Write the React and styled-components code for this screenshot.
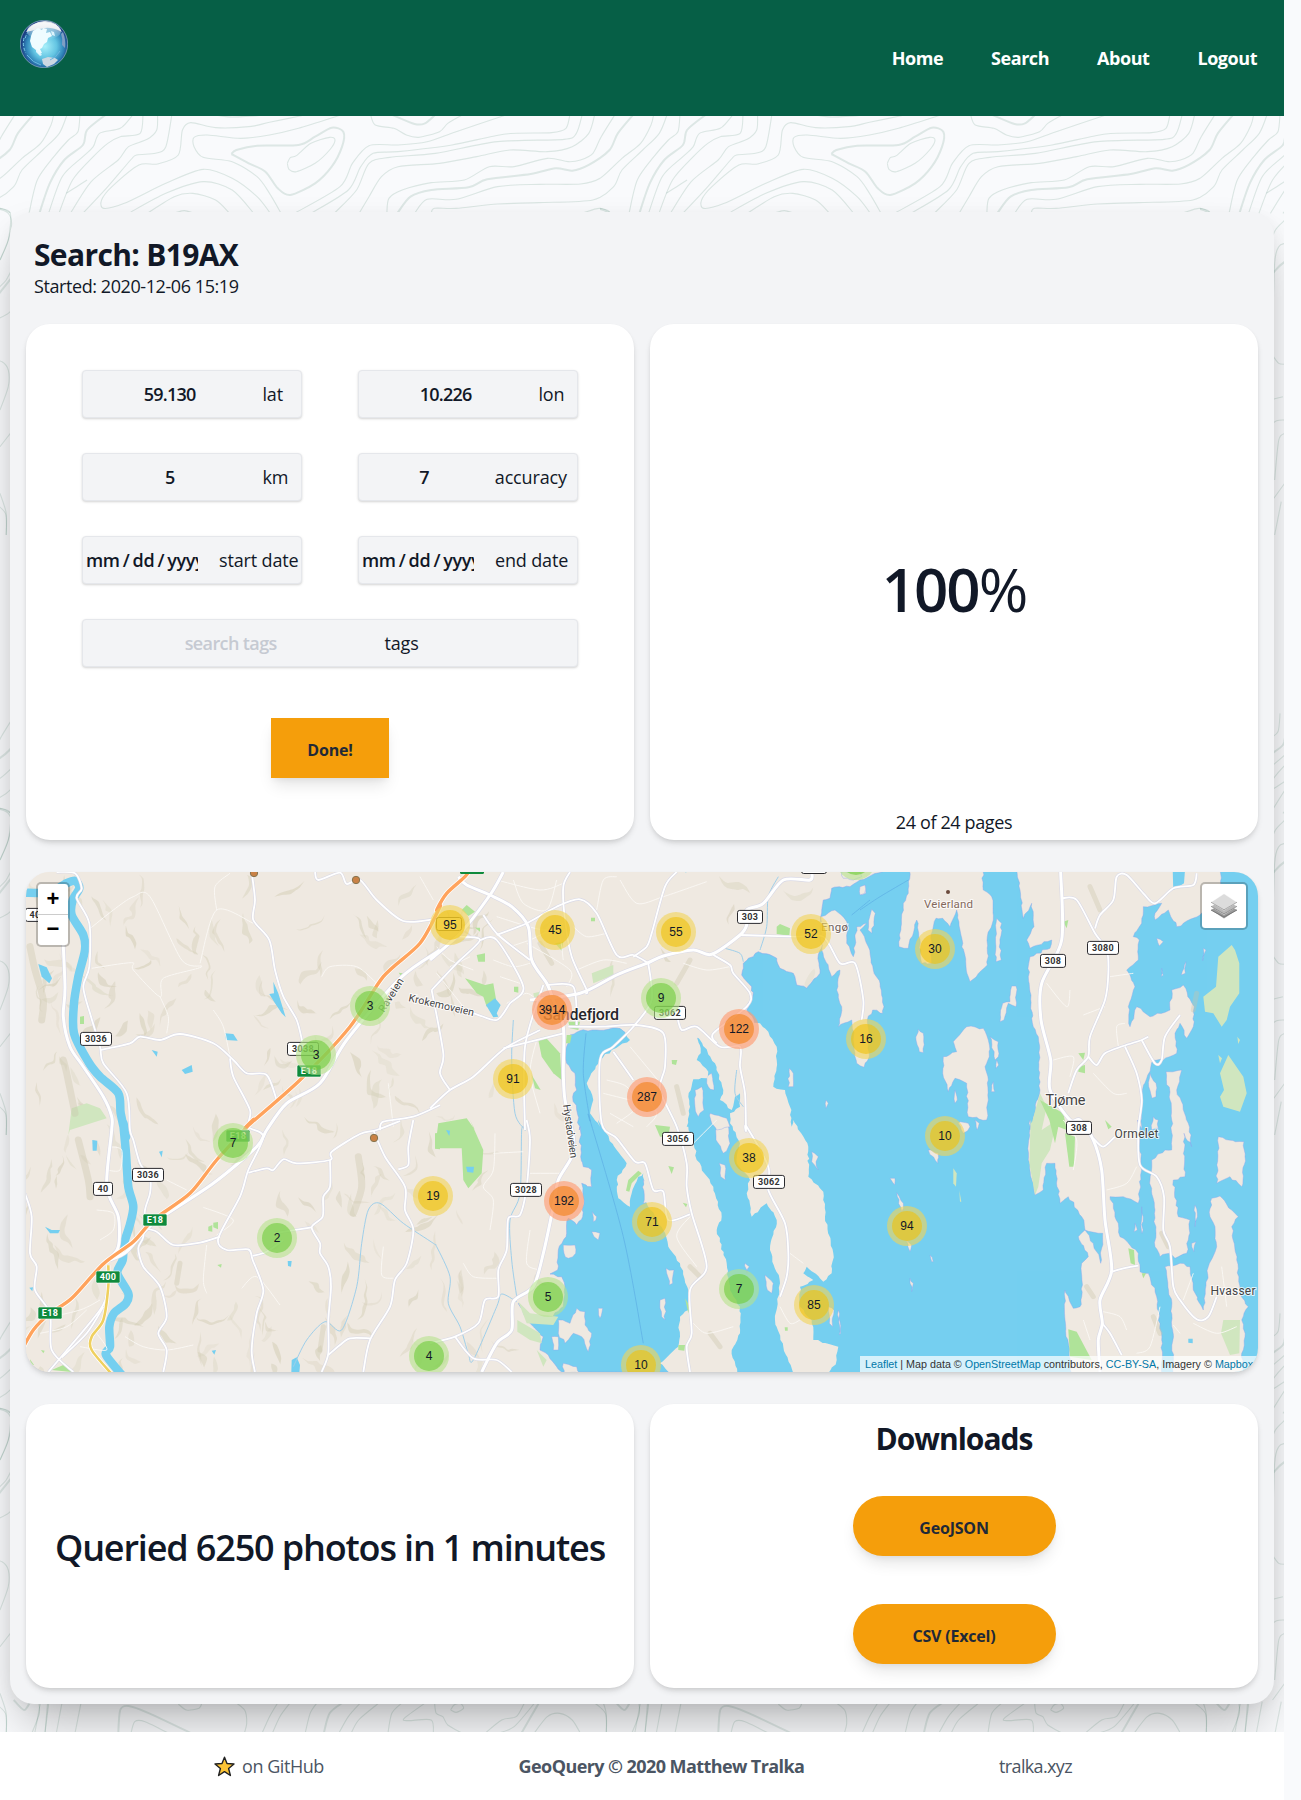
import React from "react";
import styled, { createGlobalStyle, css } from "styled-components";

const sans = `"Open Sans", "Noto Sans", sans-serif`;

const GlobalStyle = createGlobalStyle`
  *, *::before, *::after { box-sizing: border-box; }
  body { margin: 0; background: #f9fafc; color: #111827; font: 400 18px/28px ${sans}; }
  h1, h2, p { margin: 0; }
  a { color: inherit; text-decoration: none; }
`;

const Page = styled.div`
  position: relative;
  width: 1284px;
  height: 1800px;
  display: flex;
  flex-direction: column;
  overflow: hidden;
`;

/* ---------- header ---------- */
const Header = styled.header`
  position: relative;
  flex: none;
  height: 116px;
  padding: 0 27px 0 20px;
  display: flex;
  justify-content: space-between;
  align-items: center;
  background: #065f46;
`;
const Logo = styled.a`
  align-self: flex-start;
  margin-top: 20px;
  width: 48px;
  height: 48px;
`;
const Nav = styled.nav`
  display: flex;
  gap: 48px;
  font-weight: 700;
  letter-spacing: -0.45px;
  color: #fff;
`;

/* ---------- panel ---------- */
const Topography = styled.svg`
  position: absolute;
  inset: 0;
`;
const Panel = styled.main`
  position: relative;
  flex: none;
  margin: 96px 10px 28px;
  padding: 24px 16px 16px;
  border-radius: 24px;
  background: #f3f4f6;
  box-shadow: 0 25px 50px -12px rgba(0, 0, 0, 0.3), 0 4px 14px rgba(0, 0, 0, 0.05);
`;
const PanelHead = styled.div`
  padding: 1px 8px 24px;
  letter-spacing: -0.42px;
`;
const Title = styled.h1`
  margin-bottom: -1px;
  font-size: 30px;
  line-height: 36px;
  font-weight: 700;
  letter-spacing: -0.65px;
`;
const Grid = styled.div`
  display: grid;
  grid-template-columns: 1fr 1fr;
  grid-template-rows: 516px 500px 284px;
  gap: 32px 16px;
`;
const cardShadow = css`
  box-shadow: 0 4px 6px -1px rgba(0, 0, 0, 0.12), 0 2px 4px -1px rgba(0, 0, 0, 0.08);
`;
const Card = styled.section`
  display: flex;
  flex-direction: column;
  align-items: center;
  border-radius: 24px;
  background: #fff;
  ${cardShadow}
`;

/* ---------- form ---------- */
const Fields = styled.div`
  margin-top: 46px;
  display: grid;
  grid-template-columns: 220px 220px;
  grid-auto-rows: 48px;
  gap: 35px 56px;
`;
const Field = styled.label`
  display: flex;
  align-items: center;
  grid-column: span ${(p) => (p.$wide ? 2 : 1)};
  border: 1px solid #e5e7eb;
  border-radius: 4px;
  background: #f3f4f6;
  box-shadow: 0 1px 3px rgba(0, 0, 0, 0.1), 0 1px 2px rgba(0, 0, 0, 0.08);
`;
const Value = styled.span`
  flex: none;
  width: ${(p) => p.$share}%;
  padding-right: 1px;
  text-align: center;
  font-weight: 600;
  letter-spacing: -0.75px;
  color: ${(p) => (p.$placeholder ? "#c6cad2" : "#111827")};
  ${(p) => p.$placeholder && "letter-spacing: -0.6px;"}
`;
const DateValue = styled.span`
  flex: none;
  width: 115px;
  margin-right: 16px;
  padding-left: 3px;
  overflow: hidden;
  white-space: nowrap;
  font-weight: 600;
  letter-spacing: -0.35px;
  word-spacing: -1.2px;
`;
const Unit = styled.span`
  padding-left: 5px;
  white-space: nowrap;
  letter-spacing: -0.15px;
`;
const Button = styled.button`
  flex: none;
  width: ${(p) => (p.$pill ? 203 : 118)}px;
  height: 60px;
  padding: 3px 0 0;
  border: 0;
  border-radius: ${(p) => (p.$pill ? 30 : 0)}px;
  background: #f59e0b;
  color: #1f2937;
  font: 700 16px/24px ${sans};
  letter-spacing: -0.2px;
  box-shadow: 0 10px 15px -3px rgba(0, 0, 0, 0.1), 0 4px 6px -2px rgba(0, 0, 0, 0.06);
`;
const DoneButton = styled(Button)`
  margin-top: 51px;
`;

/* ---------- result cards ---------- */
const Percent = styled.div`
  flex: 1;
  display: flex;
  align-items: center;
  padding-top: 45px;
  font-size: 60px;
  line-height: 60px;
  letter-spacing: -2px;
  b { font-weight: 600; }
`;
const PageCount = styled.p`
  padding-bottom: 4px;
  letter-spacing: -0.36px;
`;
const Summary = styled(Card)`
  justify-content: center;
  font-size: 36px;
  line-height: 40px;
  font-weight: 600;
  letter-spacing: -1.15px;
  white-space: nowrap;
  padding-top: 4px;
`;
const Downloads = styled(Card)`
  padding-top: 17px;
  h2 {
    font-size: 30px;
    line-height: 36px;
    font-weight: 700;
    letter-spacing: -1px;
  }
`;
const DownloadList = styled.div`
  margin-top: 39px;
  display: flex;
  flex-direction: column;
  gap: 48px;
`;

/* ---------- map ---------- */
const MapFrame = styled.section`
  position: relative;
  grid-column: span 2;
  overflow: hidden;
  border-radius: 24px;
  background: #efe9e1;
  font-family: "Liberation Sans", Arial, sans-serif;
  ${cardShadow}
`;
const Canvas = styled.svg`
  display: block;
`;
const clusterTone = {
  s: ["rgba(181,226,140,.6)", "rgba(110,204,57,.6)"],
  m: ["rgba(241,211,87,.6)", "rgba(240,194,12,.6)"],
  l: ["rgba(253,156,115,.65)", "rgba(241,128,23,.6)"],
};
const Cluster = styled.div.attrs((p) => ({ style: { left: p.$x - 46, top: p.$y - 892 } }))`
  position: absolute;
  width: 40px;
  height: 40px;
  padding: 5px;
  border-radius: 50%;
  background: ${(p) => clusterTone[p.$tone][0]};
  span {
    display: block;
    height: 30px;
    border-radius: 50%;
    background: ${(p) => clusterTone[p.$tone][1]};
    font-size: 12px;
    line-height: 30px;
    text-align: center;
    color: #111827;
  }
`;
const control = css`
  position: absolute;
  top: 10px;
  border: 2px solid rgba(0, 0, 0, 0.22);
  border-radius: 5px;
  background: #fff;
  background-clip: padding-box;
`;
const ZoomControl = styled.div`
  ${control}
  left: 10px;
  width: 34px;
  color: #000;
  font: 700 22px/30px "Liberation Sans", sans-serif;
  text-align: center;
  div { height: 30px; }
  div + div { height: 31px; border-top: 1px solid #ccc; line-height: 28px; }
`;
const LayersControl = styled.div`
  ${control}
  right: 10px;
  width: 48px;
  height: 48px;
  display: grid;
  place-items: center;
`;
const Attribution = styled.div`
  position: absolute;
  right: 0;
  bottom: 0;
  width: 398px;
  height: 16px;
  padding-left: 5px;
  background: rgba(255, 255, 255, 0.7);
  color: #333;
  font-size: 10.75px;
  line-height: 16px;
  white-space: nowrap;
  a { color: #0078a8; }
`;

/* ---------- footer ---------- */
const Footer = styled.footer`
  position: relative;
  flex: 1;
  padding: 0 212px 0 214px;
  display: flex;
  align-items: center;
  justify-content: space-between;
  background: #fff;
  color: #4b5563;
  letter-spacing: -0.45px;
  b { font-weight: 700; letter-spacing: -0.58px; }
`;
const StarLink = styled.a`
  display: flex;
  align-items: center;
  gap: 7px;
`;
const SiteLink = styled.a`
  letter-spacing: -0.65px;
`;

/* ---------- map geometry: six tiles, points at three units per pixel ---------- */
const tiles = { A: [0, 860], B: [430, 860], C: [860, 860], D: [0, 1120], E: [430, 1120], F: [860, 1120] };
const trace = (src) => {
  let tile = tiles.A;
  const out = [];
  src.trim().split(/\s+/).forEach((tok) => {
    if (tiles[tok]) { tile = tiles[tok]; return; }
    const [x, y] = tok.split(",").map(Number);
    out.push([tile[0] + x / 3, tile[1] + y / 3]);
  });
  return out;
};
const poly = (src) => "M" + trace(src).map((p) => p.map((n) => n.toFixed(1)).join(" ")).join("L") + "Z";
const smooth = (pts) => {
  let d = `M${pts[0][0]} ${pts[0][1]}`;
  for (let i = 0; i < pts.length - 1; i++) {
    const a = pts[i - 1] || pts[i], b = pts[i], c = pts[i + 1], e = pts[i + 2] || c;
    const f = (n) => n.toFixed(1);
    d += `C${f(b[0] + (c[0] - a[0]) / 7)} ${f(b[1] + (c[1] - a[1]) / 7)} ${f(c[0] - (e[0] - b[0]) / 7)} ${f(c[1] - (e[1] - b[1]) / 7)} ${f(c[0])} ${f(c[1])}`;
  }
  return d;
};
const line = (src) => smooth(trace(src));

let seed = 11;
const rnd = () => ((seed = (seed * 16807) % 2147483647) / 2147483647);
const coast = (src) => {
  const pts = trace(src);
  const out = [];
  pts.forEach((p, i) => {
    const q = pts[(i + 1) % pts.length];
    const len = Math.hypot(q[0] - p[0], q[1] - p[1]);
    const n = len > 130 ? 1 : Math.max(1, Math.round(len / 4));
    for (let k = 0; k < n; k++) {
      const j = k ? 2.2 : 0;
      out.push([p[0] + ((q[0] - p[0]) * k) / n + (rnd() - 0.5) * j, p[1] + ((q[1] - p[1]) * k) / n + (rnd() - 0.5) * j]);
    }
  });
  return "M" + out.map((p) => `${p[0].toFixed(1)} ${p[1].toFixed(1)}`).join("L") + "Z";
};

const sea = coast(`B 420,525 407,570 410,610 435,640 440,690 428,710 440,750 448,810 E 450,20 452,110 460,140 485,150 485,200 455,190
 460,230 458,290 440,315 415,295 410,340 385,390 383,450 360,462 395,470 405,500 400,560 340,610 290,590 265,550 300,610 340,650 330,690 355,705 380,740 395,756
 F 1200,760 C 1200,30 80,30 0,60 B 1260,80 1205,85 1200,115 1180,120 1172,170 1180,250 1165,285 1170,340 1130,385 1100,375 1090,340 1050,325 1040,295 985,275 940,310 935,345 965,380 968,410 950,450 985,500
 800,535 590,520 570,505 500,510 450,512`);
const lands = [
  `B 560,500 800,500 802,535 812,580 800,600 835,635 830,655 790,658 775,710 780,740 770,800 E 775,20 790,60 800,120 850,200 875,290 860,330 890,430 900,510 930,560 930,640 905,690 922,760 720,760 690,730 745,680 750,590 775,570 775,520 750,430 715,380 700,330 650,250 640,160 625,170 605,220 600,260 565,235 560,180 590,130 560,90 505,0 B 510,800 480,760 490,720 470,670 510,600 545,570 600,540 585,515`,
  `B 796,500 990,490 1015,515 1040,560 1040,600 1030,680 1065,690 1080,740 1085,800 E 1090,0 1135,80 1135,170 1180,215 1185,290 1210,400 1205,460 1180,485 1130,440 1120,460 1150,480 1110,500 1110,560 1145,600 1150,660 1225,680 1220,720 1195,760 1090,760 1060,680 1035,600 1050,490 1020,390 1040,300 1010,250 965,290 950,220 960,180 920,130 930,70 900,10 B 900,760 930,740 930,700 915,710 905,750 870,720 880,690 855,610 800,530`,
  `B 1172,170 1215,150 1250,185 1250,250 1270,290 1280,200 1310,190 C 0,210 25,260 40,330 60,370 72,440 68,460 38,450 22,480 28,590 12,622 -10,610 B 1275,580 1265,480 1225,500 1235,440 1220,390 1230,330 1205,350 1175,270`,
  `B 1235,36 1290,36 1295,50 1270,60 1240,55`, `B 1290,85 1305,75 1308,100 1295,105`,
  `C 148,30 368,30 370,90 395,110 400,180 382,230 382,315 330,365 318,320 300,210 290,150 270,200 248,175 228,175 220,200 210,270 215,310 185,310 170,180 145,265 117,260 130,130 145,100`,
  `C 410,175 425,190 420,250 424,300 408,305`, `C 455,378 468,378 468,440 445,430 432,480 420,485 428,430 450,425`,
  `C 35,148 46,160 36,220 24,210`, `C 0,80 15,75 14,100 0,105`, `C 175,508 190,520 190,578 178,575 168,540`,
  `C 280,545 320,500 370,505 385,540 388,590 375,620 385,660 380,780 325,770 320,670 285,655 265,695 248,640 250,590 290,575`,
  `C 390,530 415,545 415,590 405,600`, `C 400,665 404,695 394,695`, `C 410,600 416,615 408,625`, `C 285,690 292,720 285,730`,
  `C 300,785 325,790 F 330,20 310,40 295,10`, `C 470,30 480,90 490,175 515,130 522,200 500,240 510,265 575,240 570,265 530,280 510,290 505,350 520,500 535,530 540,690 510,810 F 510,0 505,120 525,225 550,210 560,130 585,130 600,250 625,230 665,290 675,330 728,340 722,430 700,370 675,330 655,350 685,410 665,430 665,530 660,560 640,565 615,510 615,600 635,760 905,760 905,660 890,530 865,460 840,455 835,400 780,350 775,310 750,230 790,230 835,250 845,150 832,0 C 845,810 845,700 880,600 910,600 950,580 945,520 960,490 980,535 1000,500 1003,440 970,375 935,390 930,450 870,470 830,440 810,500 805,440 825,380 800,330 835,300 838,240 820,230 845,190 850,140 905,130 885,160 885,180 925,150 950,200 1020,165 1085,90 1080,30`,
  `C 870,640 888,670 888,710 876,715 866,680`, `C 918,635 965,630 950,690 985,790 F 995,80 972,40 975,170 940,180 955,290 990,300 985,360 980,400 945,415 930,400 900,410 885,380 885,270 870,180 875,120 915,90 935,90 935,0 C 930,720`,
  `C 880,770 895,780 F 895,25 875,30`, `F 1075,50 1105,60 1152,65 1155,110 1145,200 1110,170 1070,190`,
  `F 1055,235 1080,228 1115,270 1135,290 1115,320 1130,420 1140,520 1165,560 1145,600 1155,650 1145,700 1150,760 940,760 935,560 915,440 960,430 990,440 1000,510 1030,570 1045,440 1070,380 1065,320 1050,290`,
  `F 995,370 1008,365 1002,395`, `F 1005,255 1012,280 1005,320`, `F 825,310 832,330 822,335`, `F 845,260 850,290 846,340`,
  `E 860,20 895,15 900,70 880,100 858,60`, `E 868,130 885,135 886,180 872,170`, `E 640,180 665,195 665,245 640,250`,
  `B 795,690 815,680 822,750 805,770 795,740`, `B 830,650 845,640 852,690 835,680`, `B 840,760 890,775 900,800 860,810 845,790`,
  `B 1078,625 1090,640 1090,680 1075,680`, `B 1188,720 1195,730 1188,745`, `E 400,375 435,375 437,400 415,415 402,400`,
  `E 485,335 510,340 505,360 492,350`, `E 487,275 500,290 490,305`, `E 385,600 420,610 440,565 465,575 465,615 485,640 475,695 455,650 430,640 405,670 385,640`,
  `E 505,565 518,565 510,595`, `E 690,540 705,535 705,600 695,590`, `E 708,445 732,450 728,490 718,495`, `E 365,650 385,650 385,690 370,690`,
  `E 400,730 440,740 450,760 400,760`, `E 1195,560 1212,570 1208,620 1198,610`, `E 1225,570 1232,640 1228,645`, `E 945,430 958,440 950,460`, `E 1005,465 1030,490 1025,520 1012,510`,
  `E 1145,95 1165,110 1158,125 1165,150 1145,125`, `F 90,175 105,175 104,195`, `F 110,218 130,250 125,275`, `F 210,405 220,425 215,425`, `F 150,475 160,490 155,515`, `F 138,360 155,375 150,395`, `F 205,90 235,100 233,130`, `F 345,0 358,10 352,30`,
  `C 890,235 910,245 898,258`, `C 1030,265 1038,270 1028,302`, `C 905,325 910,345 904,350`, `C 978,305 976,340 964,345`,
].map(coast);
const reserves = [
  `C 1075,290 1115,255 1125,270 1138,310 1138,400 1110,440 1100,480 1085,500 1060,460 1035,455 1030,410 1068,380`,
  `C 1080,640 1105,585 1150,650 1160,700 1140,755 1090,740 1080,710 1092,690`, `C 1075,585 1086,595 1080,610`, `C 1132,530 1140,540 1135,552`,
  `C 540,700 560,740 545,810 F 590,0 570,90 545,130 535,200 525,225 508,130 512,0 C 515,790`, `F 280,145 290,160 288,200 280,190`, `F 298,210 304,245 300,245`,
  `F 1090,600 1140,600 1138,700 1110,705 1083,640`, `E 265,545 300,580 385,590 370,615 290,610`, `E 262,600 330,640 335,670 300,660 262,635`, `E 320,690 350,720 340,740`,
  `B 485,340 550,315 550,345 490,370`, `B 310,400 330,395 330,420 315,430`, `A 215,745 260,730 300,745 320,775 210,810 D 205,45`,
].map(poly);
const parks = [
  `B 105,355 165,375 190,370 200,430 170,440 160,410 140,400 125,380`, `B 140,285 165,280 165,305 145,305`, `B 325,540 345,530 390,580 395,660 370,640 335,590`,
  `B 305,645 332,690 315,685`, `B 25,790 110,775 135,810 E 120,0 160,90 155,160 115,205 100,180 95,85 15,85 25,10`, `B 95,150 110,135 135,155 115,168`, `B 1040,200 1050,192 1080,205 1078,228 1040,222`,
  `B 415,485 450,485 445,510 420,505`, `B 410,525 425,525 420,550 408,550`, `B 375,250 400,245 395,272`, `B 135,203 150,203 150,215`, `B 483,173 495,173 495,184 483,184`, `B 725,600 742,600 738,615 726,612`, `B 252,380 265,380 265,398 252,395`,
  `E 595,180 625,152 635,160 605,190 598,215 588,212`, `E 675,15 720,20 715,50 690,50`, `E 715,138 732,142 725,162`, `E 758,248 772,252 768,262`, `E 765,535 780,560 775,580`, `E 745,675 765,675 763,692 745,690`, `E 1064,622 1073,622 1073,632 1065,632`,
  `C 655,580 675,578 670,600`, `C 655,620 675,615 675,640 655,635`, `C 610,185 625,180 620,205`, `C 540,720 610,760 620,810 F 595,20 585,70 568,0`, `F 615,40 645,50 642,140 628,140`, `F 735,0 755,20 745,28`, `F 805,385 822,390 825,435 812,430`, `F 845,460 858,460 850,475`, `F 625,628 650,635 695,720 630,710`,
  `A 240,470 252,468 252,492 240,492`, `D 625,320 637,315 637,335 625,333`, `D 640,308 654,306 654,328 640,322`, `D 155,750 190,735 215,756`, `D 90,718 102,735 92,735`, `D 1305,40 1320,38 1320,88 1305,86`, `D 652,435 665,432 663,443`, `D 123,690 134,692 130,700`, `A 1196,338 1208,340 1204,350`,
].map(poly);
const ponds = [
  `A 115,312 140,322 156,355 148,370 125,350`, `A 820,365 835,400 857,472 845,460 825,430 808,402 822,400`, `A 675,520 700,522 713,542 678,540`, `A 455,570 473,575 470,590`, `A 545,630 575,615 578,635 555,642`, `D 277,60 292,62 290,92 278,92`,
  `D 477,95 488,92 485,112`, `D 135,320 155,330 180,330 175,340 150,340`, `D 863,423 875,423 873,440 864,438`, `D 875,720 890,712 900,735 898,760 874,760`, `D 635,692 648,690 643,704`, `D 88,503 99,502 97,514`,
  `B 168,435 195,415 212,435 200,460 205,470 190,472`, `E 108,140 132,140 130,158 112,156`, `E 48,30 60,32 58,48`, `F 985,656 998,656 998,670 985,668`, `C 938,30 975,30 972,70 940,90`, `B 760,30 770,34 768,38`,
].map(poly);
const river = line(`A 70,98 150,97 195,72 225,62 238,85 218,120 215,165 250,225 255,270 235,350 222,430 222,520 265,605 300,650 355,700 362,760 378,830 D 370,10 378,100 385,200 400,260 388,320 372,370 368,420 352,460 385,520 378,550 342,580 328,620 330,680 318,705 370,770`);
const streams = [
  `D 880,740 920,660 975,605 1025,630 1070,500 1085,370 1105,270 1140,250 1210,310 1300,370 E 20,380 60,470 55,550 90,620 115,700 130,720 200,560 215,522 260,545`,
  `B 250,480 245,600 255,760 285,810 E 275,30 270,220 240,300 245,420 260,530`, `B 1045,50 1015,110 1010,200 990,270`, `B 885,265 930,280 940,305`, `B 920,630 915,700 940,740`,
].map(line);
const ferry = [`B 468,520 460,640 480,780 E 480,0 580,350 640,670`, `C 145,60 60,110 0,150`, `B 1265,165 1320,120`].map(line);

const mainRoads = [
  `B 85,50 110,75 180,105 245,140 295,200 305,300 350,370 370,420 400,500 400,640 405,720 430,830 E 425,110 385,180 370,260 340,400 310,500 250,545 245,630 200,670 155,756`,
  `B 300,420 450,400 560,345 650,310 700,288 790,270 845,283 930,225 950,195 950,150 1000,130 1060,60 1140,60 1145,36`, `B 0,300 95,215 180,105 220,36`,
  `A 1320,270 1200,355 1040,540 960,670 860,730 800,810 D 770,80 640,190 460,310 380,395 330,420`,
  `C 602,36 605,240 545,370 543,480 572,600 570,690 630,780 F 660,0 700,60 725,150 735,300 755,450 720,540 727,610 715,660 720,756`, `A 185,160 195,380 190,470 210,560 250,620 310,710 335,770 335,810 D 320,200 355,290 355,380 325,420`,
].map(line);
const roads = [
  `A 170,36 225,40 245,85 230,115 268,190 268,320 250,380 270,460 300,560 310,610 380,700 390,810 D 400,60 420,130 450,175 450,220 435,270 430,350 415,385 430,440 480,500 500,590 475,640 500,690 490,756`,
  `A 300,570 390,550 420,530 480,540 540,522 640,550 700,600 740,640 800,645 830,720`, `A 755,36 765,120 760,180 808,240 825,330 850,410 890,480 908,550`, `A 690,595 700,650 750,750 745,800 D 790,50 745,150 720,230 655,355 680,390 745,388 758,420 790,510 770,580 755,690 765,756`,
  `A 945,36 955,60 1020,38 1040,72 1080,60 1130,120 1210,183 1300,178`, `D 745,158 800,145 820,150 850,118 890,130 990,120 995,95 1080,42 1130,30 1200,3`, `D 990,120 990,200 970,230 968,290 935,322 960,370 960,400 985,440 993,500 985,600 985,700 965,756`, `D 820,340 935,322`,
  `D 1120,30 1155,110 1215,200 1215,270 1240,330 1220,430 1185,480 1170,560 1110,660 1090,756`, `D 1195,148 1225,135 1225,80 1240,0`, `D 1110,655 1050,655 1020,675 985,705`, `D 758,408 800,395 850,360`, `A 1140,810 1150,785 1240,770 1320,735`, `D 660,350 600,368 520,375 470,335 430,325`,
  `D 75,220 95,290 90,400 110,440 105,510 150,580 155,690 220,756`, `D 145,756 300,570 325,500`, `D 185,712 260,640 310,560`,
  `B 0,745 60,690 130,650 225,565 330,510`, `B 5,390 80,310 150,240 90,230`, `B 5,390 40,580 30,640 60,690`, `B 420,36 400,80 405,180 425,290 470,390 465,400`, `B 200,225 290,190 380,140 450,118 500,160 560,285 610,285 655,310`, `B 740,36 705,80 665,220 650,260 610,290`,
  `B 160,165 205,225 300,300`, `B 150,240 200,240 280,380 240,430 200,480 130,460 0,430`, `B 415,500 520,500 620,495 700,520 705,620 690,690 740,800 E 770,130 770,200 785,280 830,440 780,510 785,640 770,680 780,756`,
  `B 655,310 665,420 610,500 550,560 510,600 515,790 E 560,55 615,125 645,130 670,210 700,215 715,300 780,283`, `B 550,575 610,660`, `B 740,460 755,510 800,500 870,560 930,560 930,620 945,700 948,810 E 950,20 1015,140 1015,210 1065,310 1075,400 1070,470 1050,530`, `B 850,285 900,315 910,340 960,400 950,440 850,520 860,550`,
  `B 930,225 1100,230 1180,230 1230,310 1275,310 1300,420 1295,480`, `B 350,375 430,380 440,495`, `B 220,565 400,520`, `B 285,810 285,560 340,375`, `E 290,0 300,60 290,200 270,285 235,295 230,390 205,450 205,530 165,540 145,610 75,650 0,670`, `E 75,650 130,715 200,720 245,756`,
  `C 605,115 650,120 705,220 740,270 745,340 735,420 690,530 685,590 650,630 625,700`, `C 705,205 720,165 760,120 770,50 800,45 850,100 885,130 940,85 1000,75 1010,40`, `C 685,590 710,615 735,580 790,558 845,540 865,530`, `C 845,540 885,610 905,600 915,530 960,465`, `C 795,560 830,640 845,720 835,810 F 840,135 890,170 912,230 910,330 930,380 940,500 960,540 1010,598 1045,590 1070,530`,
  `F 700,55 730,80 765,50`, `F 755,455 790,445 835,437`, `F 727,610 750,640 785,705`,
].map(line);
const lanes = [
  `A 265,210 340,150 400,110 450,110 545,300 605,320 490,355 480,410 400,330 395,308 275,325`, `A 600,310 650,150 760,190`, `A 650,150 645,80 690,40`, `A 480,410 505,470 500,520`, `A 965,350 990,320 1070,320 1130,370`, `A 640,450 670,500 690,590`, `A 1165,670 1180,800`, `A 1260,50 1300,120`,
  `D 620,375 610,480 620,520`, `D 725,505 770,470 840,555`, `D 1150,380 1145,465 1180,475`, `D 375,650 430,680 500,690 580,675`, `D 610,262 700,300 650,345`, `D 500,180 560,210`, `D 330,80 365,90 360,150 320,150`, `D 290,270 340,280 340,330 300,360`, `D 110,600 240,570 300,540`, `D 120,640 200,620 260,570`, `D 240,680 320,690 290,640`,
  `B 500,150 520,60 560,50`, `B 570,60 620,130 700,110 830,65`, `B 760,310 830,330 900,320`, `B 60,320 120,290`, `B 240,260 300,240 380,210 400,300`, `B 200,170 340,210 400,190`, `B 20,340 100,440`, `B 290,250 420,330 410,380`, `B 320,540 300,640 330,760`, `B 530,660 590,680 620,740 560,790`, `B 520,700 600,720`, `B 540,760 610,800`, `B 600,560 700,680`,
  `B 250,60 280,130 350,150 380,60`, `B 200,60 330,90 400,70`, `B 20,260 60,300 130,330`, `B 190,300 250,320 300,310`, `B 210,350 270,370`, `B 430,200 470,230 530,220`, `B 440,330 520,300 590,310`, `B 230,430 290,400 330,430`, `B 640,700 680,760 650,800`,
  `E 190,100 280,95`, `E 195,40 190,150 160,200 190,240 180,330`, `E 300,160 390,160`, `E 300,330 290,430 330,450`, `E 100,430 130,470 200,475`, `E 860,0 780,80`, `E 780,290 740,350 800,440`, `E 790,610 830,640 910,620`, `E 1080,400 1120,430`, `E 1050,560 1080,610 1110,600`,
  `C 670,465 735,440`, `C 560,370 620,440 630,390`, `C 750,350 820,340`, `C 580,600 640,590 630,650`, `C 700,640 760,700 800,700`, `C 775,560 770,500 795,490`, `F 610,0 650,60 640,150`, `F 740,210 800,190 830,140`, `F 730,575 780,590 800,630`, `F 830,700 870,680 900,560`, `F 1000,610 1070,640 1130,620`, `F 960,640 940,615`, `F 1085,440 1100,560`, `F 1000,460 970,540`, `F 670,600 690,660`,
].map(line);
const motorway = line(`D 60,700 100,630 150,580 215,535 310,432 400,365 460,300 570,220 650,120 760,0 A 740,800 900,660 1050,500 1150,350 1260,250 1320,140 B 20,150 50,100 105,50 125,20`);
const bypass = line(`D 325,436 325,500 310,600 275,650 275,690 335,762`);

/* hill shading: meandering tapered wisps */
const hills = Array.from({ length: 250 }, () => {
  let x = 26 + rnd() * (rnd() < 0.75 ? 470 : 850), y = 872 + rnd() * 500;
  let a = 0.5 + rnd() * 2;
  const left = [], right = [];
  const n = 3 + Math.floor(rnd() * 4), w = 1 + rnd() * 2.4;
  for (let i = 0; i <= n; i++) {
    const t = w * Math.sin((Math.PI * i) / n) * (0.6 + rnd() * 0.8);
    left.push([x - Math.sin(a) * t, y + Math.cos(a) * t]);
    right.unshift([x + Math.sin(a) * t, y - Math.cos(a) * t]);
    x += Math.cos(a) * (3 + rnd() * 6);
    y += Math.sin(a) * (3 + rnd() * 6);
    a += (rnd() - 0.5) * 1.5;
  }
  return { d: smooth([...left, ...right]) + "Z", o: 0.2 + rnd() * 0.35 };
});
const cliffs = [
  line(`A 90,260 105,330 130,420 125,480`), line(`A 190,600 200,640 225,760`), line(`D 235,60 265,180 270,230`), line(`D 1075,110 1085,200 1060,280`), line(`D 540,430 530,490`), line(`D 970,620 960,690`),
  line(`B 330,250 365,310`), line(`B 740,680 760,760`), line(`B 780,300 740,370`), line(`E 840,640 870,680`), line(`E 780,440 810,470`), line(`C 690,80 720,150`),
  line(`C 1010,400 1000,450`), line(`F 680,500 700,530`), line(`F 905,340 925,380`), line(`F 900,640 880,590`),
];

const shields = [
  [35, 915, "40"], [96, 1039, "3036"], [303, 1049, "3038"], [148, 1175, "3036"], [103, 1189, "40"], [750, 917, "303"], [670, 1013, "3062"], [678, 1139, "3056"],
  [769, 1182, "3062"], [526, 1190, "3028"], [1053, 961, "308"], [1103, 948, "3080"], [1079, 1128, "308"],
];
const euroShields = [[309, 1071, "E18"], [238, 1136, "E18"], [155, 1220, "E18"], [108, 1277, "400"], [50, 1313, "E18"]];
const shieldWidth = { 2: 19, 3: 25, 4: 31 };

const clusters = [
  [856, 860, "", "s"], [450, 925, "95", "m"], [555, 930, "45", "m"], [676, 932, "55", "m"], [811, 934, "52", "m"], [935, 949, "30", "m"], [370, 1006, "3", "s"], [316, 1055, "3", "s"],
  [552, 1010, "3914", "l"], [661, 998, "9", "s"], [739, 1029, "122", "l"], [866, 1039, "16", "m"], [513, 1079, "91", "m"], [647, 1097, "287", "l"], [233, 1143, "7", "s"],
  [945, 1136, "10", "m"], [749, 1158, "38", "m"], [433, 1196, "19", "m"], [564, 1201, "192", "l"], [652, 1222, "71", "m"], [907, 1226, "94", "m"], [277, 1238, "2", "s"],
  [548, 1297, "5", "s"], [739, 1289, "7", "s"], [814, 1305, "85", "m"], [429, 1356, "4", "s"], [641, 1365, "10", "m"],
];

function MapCanvas() {
  const label = { fontFamily: "Roboto, sans-serif", fill: "#444", stroke: "#fff", strokeOpacity: 0.75, strokeWidth: 2, paintOrder: "stroke" };
  return (
    <Canvas width="1232" height="500" viewBox="26 872 1232 500">
      <rect x="26" y="872" width="1232" height="500" fill="#efe9e1" />
      <g fill="#d3ceb6">{hills.map((h, i) => <path key={i} d={h.d} opacity={h.o} />)}</g>
      <path d={sea} fill="#75cff0" stroke="#8aa5ee" strokeWidth=".5" />
      <g fill="#efe9e1" stroke="#8aa5ee" strokeWidth=".4">{lands.slice(2).map((d, i) => <path key={i} d={d} />)}</g>
      <g fill="#efe9e1">{lands.slice(0, 2).map((d, i) => <path key={i} d={d} />)}</g>
      <g fill="#d0e6bf">{reserves.map((d, i) => <path key={i} d={d} />)}</g>
      <g fill="#b0e399">{parks.map((d, i) => <path key={i} d={d} />)}</g>
      <g fill="none" stroke="#c9c4a9" strokeLinecap="round" opacity=".36">{cliffs.map((d, i) => <path key={i} d={d} strokeWidth={i < 4 ? 7 : 5} />)}</g>
      <g fill="#75cff0">{ponds.map((d, i) => <path key={i} d={d} />)}</g>
      <g fill="none" strokeLinejoin="round">
        <path d={river} stroke="#75cff0" strokeWidth="8.5" />
        <g stroke="#9fcfea" strokeWidth="1">{streams.map((d, i) => <path key={i} d={d} />)}</g>
        <g stroke="#60b3e6" strokeWidth=".8">{ferry.map((d, i) => <path key={i} d={d} />)}</g>
        <g stroke="#fbf8f5" strokeWidth=".9">{lanes.map((d, i) => <path key={i} d={d} />)}</g>
        <g stroke="#d9d9e6" strokeWidth="2.9">{roads.map((d, i) => <path key={i} d={d} />)}</g>
        <g stroke="#d9d9e6" strokeWidth="4.2">{mainRoads.map((d, i) => <path key={i} d={d} />)}</g>
        <g stroke="#fff" strokeWidth="1.8">{roads.map((d, i) => <path key={i} d={d} />)}</g>
        <g stroke="#fff" strokeWidth="3">{mainRoads.map((d, i) => <path key={i} d={d} />)}</g>
        <path d={bypass} stroke="#fff" strokeWidth="4" />
        <path d={bypass} stroke="#efd05f" strokeWidth="2.6" />
        <path d={motorway} stroke="#fff" strokeWidth="5" />
        <path d={motorway} stroke="#ffa35c" strokeWidth="3.4" />
      </g>
      {[[254, 873], [356, 880], [374, 1138]].map(([x, y]) => <circle key={x} cx={x} cy={y} r="3.7" fill="#c98145" stroke="#857550" />)}
      <circle cx="948" cy="892" r="2" fill="#6b4a3c" />
      <rect x="436.5" y="917.5" width="25" height="13" rx="2.2" fill="#fff" stroke="#2a2a2e" />
      <rect x="801.5" y="860" width="25" height="13.5" rx="2.2" fill="#fff" stroke="#2a2a2e" />
      <rect x="460" y="862" width="24" height="12" rx="1.5" fill="#0f8a3c" />
      <g fontWeight="700" fontSize="9" fontFamily="Roboto, sans-serif" textAnchor="middle">
        {shields.map(([x, y, t], i) => (
          <g key={i}>
            <rect x={x - shieldWidth[t.length] / 2} y={y - 6.6} width={shieldWidth[t.length]} height="13" rx="2.2" fill="#fff" stroke="#2a2a2e" />
            <text x={x} y={y + 3.2} fill="#333" letterSpacing=".3">{t}</text>
          </g>
        ))}
        {euroShields.map(([x, y, t], i) => (
          <g key={i}>
            <rect x={x - 12} y={y - 6} width="24" height="12" rx="1.5" fill="#0f8a3c" stroke="#fff" strokeWidth=".6" />
            <text x={x} y={y + 3.2} fill="#fff" letterSpacing=".3">{t}</text>
          </g>
        ))}
      </g>
      <g {...label}>
        <text x="543" y="1019.5" fontSize="16" fontWeight="500" fill="#26262b" textLength="76">Sandefjord</text>
        <text x="1045.5" y="1105" fontSize="14.5" textLength="40">Tjøme</text>
        <text x="924" y="907.5" fontSize="11.5" fill="#84695c" textLength="49">Veierland</text>
        <text x="821" y="931" fontSize="11.5" fill="#6b5d5a" textLength="27">Engø</text>
        <text x="1114.5" y="1138" fontSize="12" textLength="44">Ormelet</text>
        <text x="1210.5" y="1295" fontSize="12" textLength="45">Hvasser</text>
        <text transform="translate(408 1001) rotate(13)" fontSize="10.5" textLength="67">Krokemoveien</text>
        <text transform="translate(384 1013) rotate(-58)" fontSize="10.5" textLength="38">Raveien</text>
        <text transform="translate(563 1105) rotate(82)" fontSize="10.5" textLength="54">Hystadveien</text>
      </g>
    </Canvas>
  );
}

/* ---------- contour background, a 600px repeating tile ---------- */
const pts = (s) => s.trim().split(/\s+/).map((t) => t.split(",").map(Number));
const contourTop = {
  thin: [
    "70,640 90,540 130,470 165,420 188,395 193,340", "117,640 150,530 200,470 225,440 240,400 290,385 320,345", "142,640 175,540 225,470 260,430 290,410 338,400 345,340", "170,640 220,545 285,480 310,440 355,418 378,390 380,340", "200,640 260,560 315,480 330,465 375,460 400,440 415,340",
    "735,345 650,367 600,380 520,383 460,368 440,390 430,465 380,492 335,495 270,560 245,600 250,625 300,610 400,550 490,508 560,535 620,590 652,640", "820,346 720,385 650,405 580,415 500,405 468,412 468,440 490,472 560,485 620,530 650,580 678,640",
    "693,490 700,473 715,467 750,430 795,412 808,420 795,450 760,490 715,515 697,508 693,490", "310,640 400,580 490,545 560,570 612,640", "355,640 420,590 465,580 520,600 554,640", "425,637 445,632 464,638", "520,345 560,351 640,345",
    "893,340 905,375 950,385 980,405 1010,412 1060,395 1080,370 1115,345", "1220,345 1100,395 1030,425 960,435 890,437 850,490 820,560 710,640", "1375,340 1365,385 1330,398 1220,402 1090,435 960,455 900,460 870,500 840,570 750,640", "1405,340 1390,400 1360,418 1200,425 1050,460 940,472 890,490 860,570 806,640",
    "1435,340 1420,400 1380,440 1320,455 1230,450 1150,470 1060,490 960,500 920,530 890,590 866,640", "1485,340 1450,410 1430,460 1400,480 1370,485 1320,475 1240,500 1180,500 1120,540 1040,548 970,570 938,595 933,640",
    "1577,340 1570,375 1545,430 1500,475 1447,535 1400,552 1300,553 1200,560 1100,598 1030,598 1000,640", "1610,340 1590,400 1550,450 1500,510 1480,560 1430,600 1300,608 1200,612 1100,625 1048,625 1040,640", "1408,638 1445,625 1472,638", "0,625 25,640 20,720 0,780",
  ],
  thick: ["95,640 120,550 155,480 200,435 210,390 255,344", "558,462 570,450 620,437 720,435 760,410 800,383 828,395 825,440 800,500 760,550 700,585 670,565 640,515 600,490 558,462", "945,344 1000,372 1025,370 1050,344", "1530,340 1490,400 1470,450 1420,495 1380,512 1340,505 1280,522 1175,538 1130,562 1040,570 990,590 958,640"],
};
const contourBottom = {
  thin: [
    "560,960 590,990 595,1030 588,1065", "430,972 450,990 480,985 487,968", "315,1065 325,1025 350,1025 415,1065", "630,1065 650,1010 670,968", "655,1065 675,1010 700,968", "735,1065 748,1000 765,968", "815,1065 840,1010 870,968", "845,1065 865,1020 915,968", "935,1065 945,1000 970,968",
    "1030,965 975,1015 985,1022 1040,1020 1045,1065", "1048,968 1052,1000 1068,1010 1080,1035 1115,1060", "1087,990 1095,975 1110,970 1118,985 1100,997 1087,990", "1165,1065 1210,1020 1245,1010 1265,968", "1200,1060 1240,1040 1290,968", "1285,1065 1320,1010 1350,1000 1380,1020 1402,1065", "1430,965 1460,1000 1462,1065", "1530,1065 1545,965", "1555,1065 1565,965",
    "15,1065 15,1000 0,940", "75,1065 95,1000 93,965", "108,1065 115,965", "135,1065 150,965", "180,1065 196,965",
    "-20,80 0,88 20,100 28,130 20,180 0,240", "-10,330 15,300 40,240", "-10,420 20,400 45,370", "-20,540 5,545 20,570 20,620 0,690", "0,800 25,760", "160,40 185,20 210,0", "165,200 182,150 205,120", "175,470 180,250 190,200 205,190", "172,520 190,550 210,552", "170,660 200,650", "165,740 185,722 205,720", "180,900 190,780 205,760", "175,960 210,900",
  ],
  thick: ["285,1065 290,990 310,978 360,1000 470,1065", "780,1065 795,1000 830,965", "1255,1065 1300,968", "1480,960 1505,990 1520,965", "168,290 190,260 210,240", "-5,345 30,290"],
};
function Contours({ set, y }) {
  return (
    <g transform={`translate(0 ${y}) scale(.41463 .33333)`} fill="none" stroke="#0f5f40">
      {[0, -1447].map((dx) => (
        <g key={dx} transform={`translate(${dx} 0)`}>
          {set.thin.map((s, i) => <path key={i} d={smooth(pts(s))} vectorEffect="non-scaling-stroke" strokeWidth="1.1" strokeOpacity=".13" />)}
          {set.thick.map((s, i) => <path key={i} d={smooth(pts(s))} vectorEffect="non-scaling-stroke" strokeWidth="2" strokeOpacity=".12" />)}
        </g>
      ))}
    </g>
  );
}

function Globe() {
  return (
    <svg width="48" height="48" viewBox="0 0 48 48">
      <defs>
        <radialGradient id="ocean" cx=".52" cy=".55" r=".5">
          <stop offset="0" stopColor="#a8f0fa" /><stop offset=".5" stopColor="#63c4e2" /><stop offset=".8" stopColor="#2f83b8" /><stop offset="1" stopColor="#1b3f83" />
        </radialGradient>
        <linearGradient id="frost" x2="0" y2="1"><stop offset="0" stopColor="#fff" stopOpacity=".85" /><stop offset="1" stopColor="#fff" stopOpacity="0" /></linearGradient>
      </defs>
      <circle cx="24" cy="24" r="23.7" fill="url(#ocean)" stroke="#a7bfd6" strokeWidth=".6" />
      <path d="M6 12Q12 2 24 1T42 12Q32 7 25 8T6 12Z" fill="#d5dce4" />
      <ellipse cx="24" cy="11" rx="17" ry="9" fill="url(#frost)" />
      <path d="M13 11l5-3 4 2 1-2 4 1-1 4 4-1 2 4-4 2-1 4-3 2-2 4-2 1 2 4-3 1-3-4-4-3-2-6 1-5Z" fill="#effcff" />
      <path d="M16 29l3 2 3 4-2 1-4-4ZM31 11l3 1 1 4-3-1Z" fill="#e5f8ff" opacity=".9" />
      <path d="M22 39l6-2 7 1 3 2-4 4-7 3-4-3Z" fill="#ccd8e2" />
      <path d="M43 12q3 8 2 16l-3-3q1-6-1-11Z" fill="#7f9fc4" />
      <path d="M4 18q-2 8 2 15M9 11q-4 5-4 9" fill="none" stroke="#7ed0ec" strokeWidth="1" strokeDasharray="3 2" />
      <path d="M40 31q-4 7-10 9M7 35q6 8 14 10" fill="none" stroke="#6cb6e0" strokeWidth="1" />
    </svg>
  );
}

function LayersIcon() {
  return (
    <svg width="28" height="28" viewBox="0 0 28 28">
      <path d="M1 18l13-8 13 8-13 8.5Z" fill="#9b9b9b" />
      <path d="M1 18l13 7 13-7" fill="none" stroke="#777" strokeWidth="1" />
      <path d="M1 14.3l13-8 13 8-13 8.2Z" fill="#b9b9b9" stroke="#fff" strokeWidth=".5" />
      <path d="M1 14.3l13 7.6 13-7.6" fill="none" stroke="#858585" strokeWidth=".8" />
      <path d="M1 10.2l13-8.5 13 8.5-13 8Z" fill="#dcdcdc" stroke="#fff" strokeWidth=".5" />
      <path d="M1 10.2l13 7.6 13-7.6" fill="none" stroke="#999" strokeWidth=".8" />
    </svg>
  );
}

function NumberField({ value, unit, share, wide, placeholder }) {
  return (
    <Field $wide={wide}>
      <Value $share={share} $placeholder={placeholder}>{value}</Value>
      <Unit>{unit}</Unit>
    </Field>
  );
}
function DateField({ unit }) {
  return (
    <Field>
      <DateValue>mm / dd / yyyy</DateValue>
      <Unit>{unit}</Unit>
    </Field>
  );
}

export default function App() {
  return (
    <>
      <GlobalStyle />
      <Page>
        <Topography width="1284" height="1800">
          <defs>
            <pattern id="topo" width="600" height="600" patternUnits="userSpaceOnUse">
              <Contours set={contourTop} y={0} />
              <Contours set={contourBottom} y={180} />
            </pattern>
          </defs>
          <rect width="1284" height="1800" fill="url(#topo)" />
        </Topography>
        <Header>
          <Logo><Globe /></Logo>
          <Nav><a>Home</a><a>Search</a><a>About</a><a>Logout</a></Nav>
        </Header>
        <Panel>
          <PanelHead>
            <Title>Search: B19AX</Title>
            <p>Started: 2020-12-06 15:19</p>
          </PanelHead>
          <Grid>
            <Card>
              <Fields>
                <NumberField value="59.130" unit="lat" share={80} />
                <NumberField value="10.226" unit="lon" share={80} />
                <NumberField value="5" unit="km" share={80} />
                <NumberField value="7" unit="accuracy" share={60} />
                <DateField unit="start date" />
                <DateField unit="end date" />
                <NumberField value="search tags" unit="tags" share={60} wide placeholder />
              </Fields>
              <DoneButton>Done!</DoneButton>
            </Card>
            <Card>
              <Percent><b>100</b>%</Percent>
              <PageCount>24 of 24 pages</PageCount>
            </Card>
            <MapFrame>
              <MapCanvas />
              {clusters.map(([x, y, n, tone], i) => (
                <Cluster key={i} $x={x} $y={y} $tone={tone}><span>{n}</span></Cluster>
              ))}
              <ZoomControl><div>+</div><div>−</div></ZoomControl>
              <LayersControl><LayersIcon /></LayersControl>
              <Attribution>
                <a>Leaflet</a> | Map data © <a>OpenStreetMap</a> contributors, <a>CC-BY-SA</a>, Imagery © <a>Mapbox</a>
              </Attribution>
            </MapFrame>
            <Summary as="p">Queried 6250 photos in 1 minutes</Summary>
            <Downloads>
              <h2>Downloads</h2>
              <DownloadList>
                <Button $pill>GeoJSON</Button>
                <Button $pill>CSV (Excel)</Button>
              </DownloadList>
            </Downloads>
          </Grid>
        </Panel>
        <Footer>
          <StarLink>
            <svg width="21" height="21" viewBox="0 0 21 21">
              <path d="M10.5 1.2l2.5 6.3 7 .5-5.4 4.5 1.8 7-5.9-3.8-5.9 3.8 1.8-7L1 8l7-.5Z" fill="#fdc435" stroke="#222" strokeWidth="1.4" strokeLinejoin="round" />
            </svg>
            on GitHub
          </StarLink>
          <b>GeoQuery © 2020 Matthew Tralka</b>
          <SiteLink>tralka.xyz</SiteLink>
        </Footer>
      </Page>
    </>
  );
}
